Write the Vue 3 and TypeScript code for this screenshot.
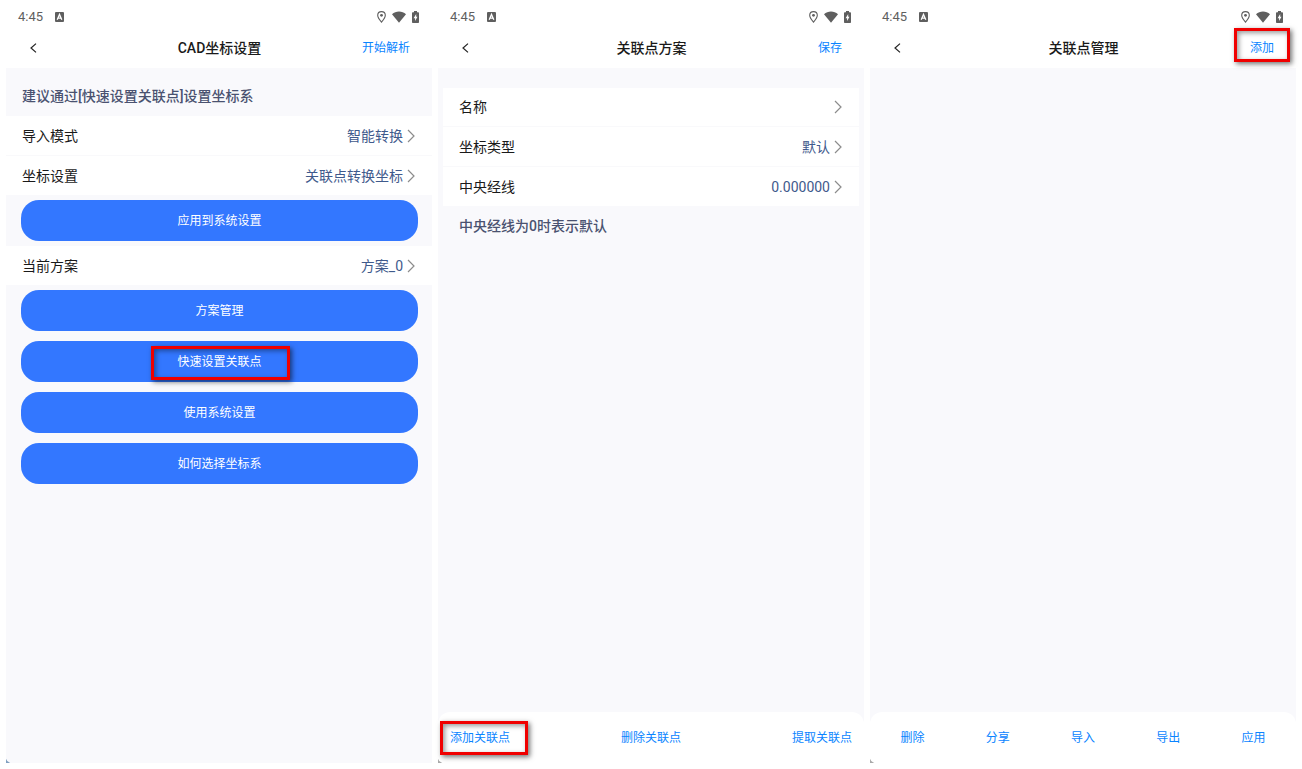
<script setup lang="ts">
interface Row {
  label: string
  value: string
}
interface Screen {
  id: string
  title: string
  action: string
  marked?: boolean
  tools: string[]
  markedTool?: string
}

const screens: Screen[] = [
  { id: 'cad', title: 'CAD坐标设置', action: '开始解析', tools: [] },
  {
    id: 'plan',
    title: '关联点方案',
    action: '保存',
    tools: ['添加关联点', '删除关联点', '提取关联点'],
    markedTool: '添加关联点',
  },
  {
    id: 'manage',
    title: '关联点管理',
    action: '添加',
    marked: true,
    tools: ['删除', '分享', '导入', '导出', '应用'],
  },
]

const importRows: Row[] = [
  { label: '导入模式', value: '智能转换' },
  { label: '坐标设置', value: '关联点转换坐标' },
]
const schemeRows: Row[] = [{ label: '当前方案', value: '方案_0' }]
const planRows: Row[] = [
  { label: '名称', value: '' },
  { label: '坐标类型', value: '默认' },
  { label: '中央经线', value: '0.000000' },
]
const groups = [
  { rows: importRows, buttons: ['应用到系统设置'] },
  { rows: schemeRows, buttons: ['方案管理', '快速设置关联点', '使用系统设置', '如何选择坐标系'] },
]
const markedButton = '快速设置关联点'
</script>

<template>
  <main class="board">
    <section v-for="s in screens" :key="s.id" class="phone" :aria-label="s.title">
      <div class="status">
        <span class="time">4:45</span>
        <svg class="badge" width="9" height="10" viewBox="0 0 9 10" aria-hidden="true">
          <rect width="9" height="10" rx="1" fill="#5f5f5f" />
          <path d="M2.2 7.8 4.5 2.4 6.8 7.8M3.1 6.1h2.8" fill="none" stroke="#fff" stroke-width="1.3" />
        </svg>
        <span class="icons">
          <svg width="9" height="12" viewBox="0 0 9 12" aria-hidden="true">
            <path d="M4.500.6C2.300.6.7 2.200.7 4.300.7 6.800 4.500 11.200 4.500 11.200s3.800-4.400 3.800-6.900C8.300 2.200 6.700.6 4.500.6z" fill="none" stroke="#5f5f5f" stroke-width="1.1" />
            <circle cx="4.5" cy="4.3" r="1.4" fill="#5f5f5f" />
          </svg>
          <svg width="14" height="12" viewBox="0 0 14 12" aria-hidden="true">
            <path d="M7 11.800 0 3.200C2 1.500 4.300.6 7 .6s5 .9 7 2.600z" fill="#5f5f5f" />
          </svg>
          <svg width="7" height="12" viewBox="0 0 7 12" aria-hidden="true">
            <path d="M2 0h3v1.200h1.200q.8 0 .8.8v9.200q0 .8-.8.8H.8q-.8 0-.8-.8V2q0-.8.8-.8H2z" fill="#5f5f5f" />
            <path d="M4.200 3 1.600 7.200h1.500V10l2.400-4.200H4.200z" fill="#fff" />
          </svg>
        </span>
      </div>

      <header class="nav">
        <button class="back" type="button" aria-label="返回">
          <svg width="7" height="10" viewBox="0 0 7 10" aria-hidden="true">
            <path d="M6 .6 1 5l5 4.400" fill="none" stroke="#222" stroke-width="1.200" />
          </svg>
        </button>
        <h1>{{ s.title }}</h1>
        <button class="link" :class="{ 'mark mark-action': s.marked }" type="button">{{ s.action }}</button>
      </header>

      <div class="body">
        <template v-if="s.id === 'cad'">
          <p class="hint">建议通过[快速设置关联点]设置坐标系</p>
          <template v-for="(g, i) in groups" :key="i">
            <div class="rows">
              <button v-for="r in g.rows" :key="r.label" class="row" type="button">
                <span>{{ r.label }}</span>
                <span class="value">{{ r.value }}</span>
                <svg width="8" height="14" viewBox="0 0 8 14" aria-hidden="true">
                  <path d="M1 1l6 6-6 6" fill="none" stroke="#8c8c8c" stroke-width="1.200" />
                </svg>
              </button>
            </div>
            <div class="buttons">
              <button v-for="b in g.buttons" :key="b" class="primary" type="button">
                <span :class="{ 'mark mark-button': b === markedButton }">{{ b }}</span>
              </button>
            </div>
          </template>
        </template>

        <template v-else-if="s.id === 'plan'">
          <div class="rows card">
            <button v-for="r in planRows" :key="r.label" class="row" type="button">
              <span>{{ r.label }}</span>
              <span class="value">{{ r.value }}</span>
              <svg width="8" height="14" viewBox="0 0 8 14" aria-hidden="true">
                <path d="M1 1l6 6-6 6" fill="none" stroke="#8c8c8c" stroke-width="1.200" />
              </svg>
            </button>
          </div>
          <p class="hint note">中央经线为0时表示默认</p>
        </template>
      </div>

      <footer v-if="s.tools.length" class="tools" :class="s.id">
        <button
          v-for="t in s.tools"
          :key="t"
          class="link"
          :class="{ 'mark mark-tool': t === s.markedTool }"
          type="button"
        >{{ t }}</button>
      </footer>
      <svg class="corner" width="5" height="5" viewBox="0 0 6 6" aria-hidden="true">
        <path d="M0 1Q1 5 5 6H0z" :fill="s.id === 'cad' ? '#7f9fc0' : '#a9a9a9'" />
      </svg>
    </section>
  </main>
</template>

<style>
body {
  margin: 0;
  background: #fff;
}
</style>

<style scoped>
.board {
  box-sizing: border-box;
  min-height: 100vh;
  display: grid;
  grid-template-columns: repeat(3, 1fr);
  gap: 6px;
  padding: 0 6px 6px;
  font-family: Roboto, "Noto Sans CJK SC", sans-serif;
  color: #1a1a1a;
}
button {
  font: inherit;
  color: inherit;
  border: 0;
  padding: 0;
  background: none;
  cursor: pointer;
}
svg {
  display: block;
  flex: none;
}
.phone {
  position: relative;
  display: flex;
  flex-direction: column;
  min-width: 0;
  background: #f9f9fc;
}
.status {
  display: flex;
  align-items: center;
  height: 28px;
  padding: 5px 13px 0 12px;
  box-sizing: border-box;
  background: #fff;
}
.time {
  font-size: 13px;
  line-height: 16px;
  color: #5f5f5f;
}
.badge {
  margin-left: 12px;
}
.icons {
  display: flex;
  align-items: center;
  gap: 6px;
  margin-left: auto;
}
.nav {
  display: grid;
  grid-template-columns: 1fr auto 1fr;
  align-items: center;
  height: 40px;
  padding: 0 22px 0 23px;
  background: #fff;
}
.back {
  justify-self: start;
  padding: 4px 1px;
}
h1 {
  margin: 0;
  font-size: 14px;
  line-height: 20px;
  font-weight: 500;
}
.link {
  position: relative;
  font-size: 12px;
  line-height: 20px;
  color: #0a84ff;
}
.nav .link {
  justify-self: end;
}
.body {
  flex: 1;
}
.hint {
  margin: 0;
  padding: 18px 16px 10px;
  font-size: 14px;
  line-height: 20px;
  font-weight: 500;
  color: #4a5270;
}
.rows {
  background: #fff;
}
.row {
  display: flex;
  align-items: center;
  width: 100%;
  height: 39px;
  padding: 0 17px 0 16px;
  font-size: 14px;
  line-height: 20px;
  text-align: left;
}
.row + .row {
  height: 40px;
  border-top: 1px solid #f9f9fb;
}
.value {
  margin-left: auto;
  margin-right: 4px;
  color: #3f5a8c;
}
.buttons {
  display: flex;
  flex-direction: column;
  gap: 10px;
  padding: 5px 14px 5px 15px;
}
.primary {
  height: 41px;
  border-radius: 18px;
  background: #3377ff;
  color: #fff;
  font-size: 12px;
  line-height: 20px;
}
.primary span {
  display: inline-block;
}
.card {
  margin: 20px 5px 0;
}
.card .row:first-child {
  height: 38px;
}
.note {
  padding: 10px 21px;
}
.tools {
  display: flex;
  justify-content: space-between;
  align-items: center;
  height: 51px;
  padding: 0 12px;
  border-radius: 12px 12px 0 0;
  background: #fff;
}
.tools.manage {
  padding: 0;
}
.tools.manage .link {
  flex: 1;
}
.mark {
  position: relative;
}
.mark::after {
  content: "";
  position: absolute;
  border: 3px solid #f00000;
  box-shadow: 2px 2px 5px rgba(0, 0, 0, 0.55), inset 2px 2px 5px rgba(0, 0, 0, 0.4);
  pointer-events: none;
}
.mark-button::after {
  inset: -6px -28px -8px -26px;
}
.mark-action::after {
  inset: -10px -16px -4px;
}
.mark-tool::after {
  inset: -7px -18px -7px -10px;
}
.corner {
  position: absolute;
  left: 0;
  bottom: 0;
}
</style>
